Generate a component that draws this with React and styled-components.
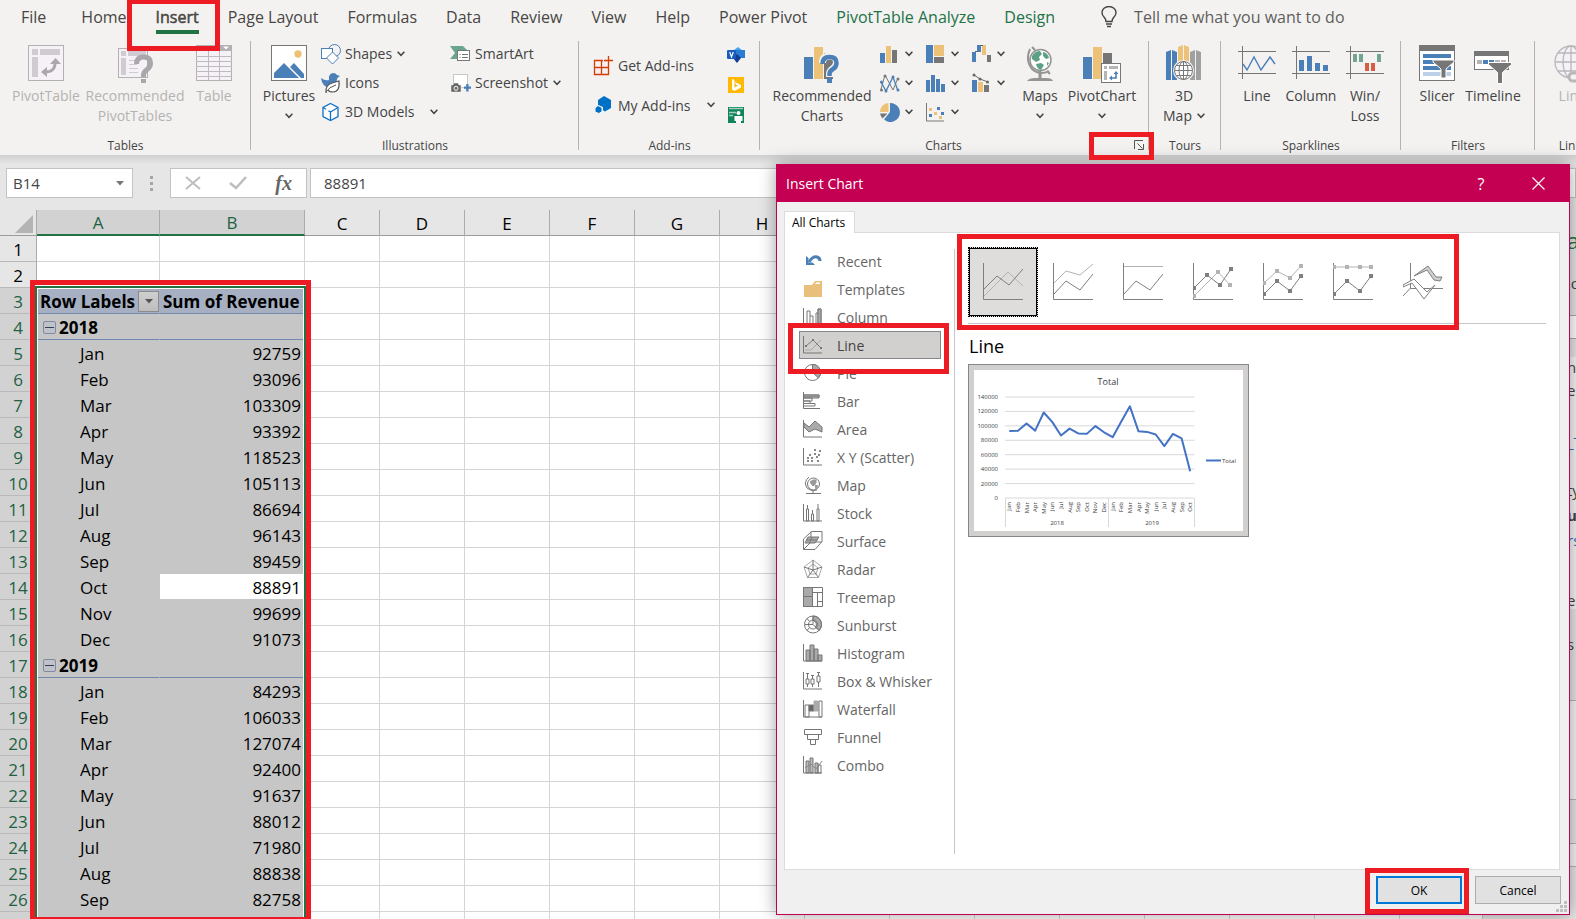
import React from "react";
import styled, { createGlobalStyle, css } from "styled-components";

const ui = `"Open Sans", "Noto Sans", sans-serif`;
const RED = "#ed1c24";
const GREEN = "#217346";
const BLUE = "#4a7fb8";
const GOLD = "#ecc279";
const GRAY = "#767676";

const Global = createGlobalStyle`
  *, *::before, *::after { box-sizing: border-box; }
  html, body, #root { height: 100%; }
  body { margin: 0; overflow: hidden; font-family: ${ui}; color: #444; }
  button, input { font: inherit; color: inherit; }
  button { margin: 0; padding: 0; border: 0; background: none; }
  svg { display: block; flex: none; }
`;

const Window = styled.div`
  position: relative;
  height: 100%;
  display: flex;
  flex-direction: column;
  overflow: hidden;
  background: #e6e6e6;
`;

const Marker = styled.span`
  position: absolute;
  border: 5px solid ${RED};
  pointer-events: none;
  z-index: 3;
`;
const TabMarker = styled(Marker)`inset: -1px -7px -12px -15px;`;
const LauncherMarker = styled(Marker)`inset: -8px -10px -10px -45px;`;
const NavMarker = styled(Marker)`inset: -8px -8px -15px -11px;`;
const GalleryMarker = styled(Marker)`inset: -13px 87px -7px -11px;`;
const OkMarker = styled(Marker)`inset: -8px -7px -10px -11px;`;
const RangeMarker = styled(Marker)`
  top: 70px;
  left: 30px;
  width: 281px;
  bottom: -3px;
`;

/* ---------- Ribbon ---------- */
const Ribbon = styled.header`
  flex: none;
  background: #f3f2f1;
  position: relative;
`;
const TabRow = styled.nav`
  display: flex;
  gap: 1px;
  height: 39px;
  padding-left: 7px;
`;
const Tab = styled.button`
  position: relative;
  flex: none;
  height: 39px;
  padding: 0 14px 5px;
  font-size: 16px;
  line-height: 34px;
  white-space: nowrap;
  color: ${(p) => (p.$contextual ? GREEN : "#484644")};
  &:first-child { margin-right: 6px; }
  ${(p) => p.$active && css`
    -webkit-text-stroke: 0.5px #484644;
    &::after {
      content: "";
      position: absolute;
      left: 14px;
      right: 14px;
      bottom: 5px;
      height: 4px;
      background: ${GREEN};
    }
  `}
`;
const TellMe = styled.label`
  display: flex;
  align-items: center;
  gap: 17px;
  height: 34px;
  padding-left: 31px;
  font-size: 16px;
`;
const TellInput = styled.input`
  width: 240px;
  padding: 0;
  border: 0;
  background: none;
  &::placeholder { color: #605e5c; opacity: 1; }
`;
const Groups = styled.div`
  display: flex;
  height: 116px;
`;
const Group = styled.section`
  position: relative;
  flex: none;
  width: ${(p) => p.$width}px;
  display: flex;
  flex-direction: column;
  justify-content: space-between;
  padding-bottom: 1px;
  &::after {
    content: "";
    position: absolute;
    top: 2px;
    right: 0;
    bottom: 5px;
    width: 1px;
    background: #b5b2b0;
  }
`;
const GroupBody = styled.div`
  display: flex;
  padding-left: ${(p) => p.$inset || 10}px;
`;
const GroupFoot = styled.div`
  display: flex;
  align-items: center;
  height: 18px;
  font-size: 12px;
`;
const GroupName = styled.span`
  flex: 1;
  text-align: center;
`;
const Launcher = styled.button`
  position: relative;
  width: 10px;
  height: 10px;
  margin: 0 5px 0 7px;
`;
const BigButton = styled.button`
  flex: none;
  display: flex;
  flex-direction: column;
  align-items: center;
  width: ${(p) => p.$width}px;
  padding-top: 4px;
  font-size: 14px;
  line-height: 20px;
  white-space: nowrap;
  color: ${(p) => (p.disabled ? "#b5b3b1" : "#444")};
`;
const BigIcon = styled.span`
  height: 43px;
`;
const BigLabel = styled.span`
  display: flex;
  align-items: center;
  gap: 5px;
`;
const ChevronLine = styled.span`
  height: 18px;
  padding-top: 7px;
`;
const Stack = styled.div`
  display: flex;
  flex-direction: column;
  width: ${(p) => p.$width}px;
  padding-top: ${(p) => p.$top || 0}px;
  padding-left: ${(p) => p.$left || 0}px;
`;
const SmallButton = styled.button`
  display: flex;
  align-items: center;
  gap: 3px;
  height: ${(p) => p.$height || 29}px;
  font-size: 14px;
  white-space: nowrap;
`;
const SmallText = styled.span`
  margin-right: ${(p) => (p.$split ? 13 : 2)}px;
`;
const ChartGrid = styled.div`
  display: grid;
  grid-template-columns: 46px 46px 44px;
  grid-auto-rows: 29px;
  padding-left: 6px;
`;
const ChartButton = styled.button`
  display: flex;
  align-items: center;
  gap: 5px;
`;

/* ---------- Formula bar ---------- */
const FormulaBar = styled.div`
  flex: none;
  display: flex;
  align-items: flex-start;
  height: 55px;
  padding: 13px 0 0 6px;
  background: linear-gradient(#cfcfcf, #e6e6e6 9px);
`;
const Field = styled.div`
  display: flex;
  align-items: center;
  height: 30px;
  background: #fff;
  border: 1px solid #c3c3c3;
`;
const NameBox = styled(Field)`
  width: 127px;
  padding-right: 8px;
`;
const NameInput = styled.input`
  flex: 1;
  min-width: 0;
  padding: 0 0 0 6px;
  border: 0;
  outline: 0;
  background: none;
  font-size: 15px;
`;
const Dots = styled.span`
  display: grid;
  gap: 3px;
  width: 37px;
  padding: 8px 0 0 17px;
  i { width: 3px; height: 3px; background: #a6a6a6; }
`;
const Actions = styled(Field)`
  width: 137px;
  justify-content: space-around;
  margin-right: 3px;
`;
const FxButton = styled.button`
  font: italic 700 20px "Liberation Serif", serif;
  color: #666;
`;
const FormulaField = styled(Field)`flex: 1;`;
const FormulaInput = styled(NameInput)`
  padding-left: 13px;
`;

/* ---------- Worksheet ---------- */
const Body = styled.div`
  flex: 1;
  min-height: 0;
  display: flex;
`;
const Sheet = styled.main`
  position: relative;
  flex: 1;
  min-width: 0;
  overflow: hidden;
  background: #fff;
`;
const Grid = styled.table`
  width: 1450px;
  table-layout: fixed;
  border-collapse: separate;
  border-spacing: 0;
  font-size: 17px;
  line-height: 23px;
  color: #000;
`;
const Col = styled.col`width: ${(p) => p.$width}px;`;
const ColHead = styled.th`
  height: 26px;
  padding: 1px 0 0;
  font-weight: 400;
  border-right: 1px solid #ababab;
  border-bottom: ${(p) => (p.$on ? `2px solid ${GREEN}` : "1px solid #9c9c9c")};
  background: ${(p) => (p.$on ? "#d2d2d2" : "#e6e6e6")};
  color: ${(p) => (p.$on ? "#1e6242" : "#000")};
`;
const Corner = styled(ColHead)`
  padding: 3px 3px 0 15px;
`;
const RowHead = styled.th`
  height: 26px;
  padding: 2px 0 0;
  font-weight: 400;
  border-right: 1px solid #ababab;
  border-bottom: 1px solid #b9b9b9;
  background: ${(p) => (p.$on ? "#d2d2d2" : "#e6e6e6")};
  color: ${(p) => (p.$on ? "#1e6242" : "#000")};
`;
const Cell = styled.td`
  height: 26px;
  padding: 0;
  border-right: 1px solid #d4d4d4;
  border-bottom: 1px solid #d4d4d4;
`;
const PivotCell = styled.td`
  height: 26px;
  padding: 2px 3px 0;
  border-right: 1px solid ${(p) => (p.$head ? "#a6b0c2" : "#c6c6c6")};
  border-bottom: 1px solid ${(p) => (p.$rule ? "#7288ad" : "#c6c6c6")};
  background: ${(p) => (p.$active ? "#fff" : p.$head ? "#a6b0c2" : "#c6c6c6")};
  font-weight: ${(p) => (p.$bold ? 700 : 400)};
  text-align: ${(p) => (p.$num ? "right" : "left")};
  padding-left: ${(p) => (p.$indent ? 43 : 3)}px;
  white-space: nowrap;
`;
const HeadLine = styled.span`
  display: flex;
  align-items: center;
  justify-content: space-between;
`;
const FilterButton = styled.button`
  display: grid;
  place-items: center;
  width: 21px;
  height: 21px;
  margin-right: -3px;
  border: 1px solid #8b8b8b;
  background: linear-gradient(#cfcfcf, #bdbdbd);
`;
const YearLine = styled.span`
  display: flex;
  align-items: center;
  gap: 3px;
  padding-left: 3px;
`;
const Collapse = styled.button`
  display: grid;
  place-items: center;
  width: 13px;
  height: 13px;
  border: 1px solid #7e8ba3;
  border-radius: 2px;
  background: #bfc3c9;
  &::after { content: ""; width: 9px; height: 1px; background: #333f55; }
`;
const Selection = styled.div`
  position: absolute;
  top: 76px;
  left: 35px;
  width: 271px;
  bottom: -4px;
  border: 2px solid ${GREEN};
  box-shadow: inset 0 0 0 1px #fff, 0 -1px 0 #fff;
  pointer-events: none;
`;

/* ---------- Field pane at the right edge ---------- */
const Pane = styled.aside`
  flex: none;
  width: 94px;
  background: #e6e6e6;
  border-left: 1px solid #c6c6c6;
  overflow: hidden;
`;
const PaneText = styled.div`
  height: 20px;
  margin-top: ${(p) => p.$gap}px;
  padding-left: 84px;
  font-size: 15px;
  line-height: 20px;
  white-space: nowrap;
  font-weight: ${(p) => (p.$bold ? 700 : 400)};
  color: ${(p) => p.$color || "#444"};
`;
const PaneTitle = styled(PaneText)`
  font-size: 22px;
  color: ${GREEN};
`;
const PaneSearch = styled.div`
  height: 24px;
  margin: 22px 0 18px;
  border: 1px solid #ababab;
  border-right: 0;
  background: #fff;
`;
const PaneList = styled.div`
  height: 252px;
  background: #f6f6f6;
  overflow: hidden;
`;
const PaneArea = styled.div`
  height: ${(p) => p.$height}px;
  margin-top: ${(p) => p.$gap}px;
  border: 1px solid #b6b6b6;
  border-right: 0;
  background: #f6f6f6;
`;

/* ---------- Dialog ---------- */
const Dialog = styled.section`
  position: absolute;
  z-index: 2;
  top: 164px;
  right: 6px;
  bottom: 4px;
  width: 794px;
  display: flex;
  flex-direction: column;
  border: 1px solid #c30052;
  background: #f0f0f0;
  box-shadow: 0 0 16px rgba(0, 0, 0, 0.38);
  color: #000;
`;
const TitleBar = styled.div`
  flex: none;
  display: flex;
  align-items: center;
  height: 37px;
  padding: 0 22px 0 9px;
  background: #c30052;
  color: #fff;
`;
const Title = styled.h1`
  flex: 1;
  margin: 0;
  font-size: 14px;
  font-weight: 400;
`;
const TitleButton = styled.button`
  display: grid;
  place-items: center;
  width: 18px;
  margin-left: 39px;
  font-size: 16px;
`;
const DialogTabs = styled.div`
  display: flex;
  padding: 9px 0 0 7px;
`;
const DialogTab = styled.button`
  position: relative;
  z-index: 1;
  width: 71px;
  height: 22px;
  margin-bottom: -1px;
  padding-right: 2px;
  border: 1px solid #dcdcdc;
  border-bottom: 0;
  background: #fff;
  font-size: 12px;
`;
const Panel = styled.div`
  flex: 1;
  min-height: 0;
  display: flex;
  margin: 0 9px 0 7px;
  border: 1px solid #dcdcdc;
  background: #fff;
`;
const TypeList = styled.ul`
  flex: none;
  width: 156px;
  margin: 0;
  padding: 14px 0 0;
  list-style: none;
`;
const TypeItem = styled.li`
  position: relative;
  width: 142px;
  margin-left: 14px;
`;
const TypeButton = styled.button`
  display: flex;
  align-items: center;
  gap: 14px;
  width: 142px;
  height: 28px;
  padding-left: 3px;
  border: 1px solid ${(p) => (p.$on ? "#85878a" : "transparent")};
  background: ${(p) => (p.$on ? "#d1d0ce" : "none")};
  font-size: 14px;
  white-space: nowrap;
  color: ${(p) => (p.$on ? "#444" : "#666")};
`;
const Divider = styled.div`
  width: 14px;
  margin: 16px 0 15px 13px;
  border-left: 1px solid #c6c6c6;
`;
const Detail = styled.div`
  flex: 1;
  min-width: 0;
  padding: 14px 13px 0 0;
`;
const Gallery = styled.div`
  position: relative;
  display: flex;
  padding-bottom: 6px;
  border-bottom: 1px solid #c6c6c6;
`;
const Thumb = styled.button`
  display: grid;
  place-items: center;
  width: 70px;
  height: 70px;
  ${(p) => p.$on && css`
    border: 1px dotted #000;
    outline: 1px solid #000;
    outline-offset: -2px;
    background: #dedddc;
  `}
`;
const Heading = styled.h2`
  margin: 0;
  padding: 9px 0 5px 1px;
  font-size: 18px;
  line-height: 26px;
  font-weight: 400;
`;
const Preview = styled.button`
  display: block;
  padding: 5px;
  border: 1px solid #85878a;
  background: #d1d0ce;
  svg { background: #fff; }
`;
const Footer = styled.div`
  flex: none;
  display: flex;
  justify-content: flex-end;
  gap: 13px;
  padding: 6px 8px 10px;
`;
const OkWrap = styled.span`position: relative;`;
const DialogButton = styled.button`
  display: block;
  width: 86px;
  height: 28px;
  border: ${(p) => (p.$primary ? "2px solid #0078d7" : "1px solid #adadad")};
  background: #e1e1e1;
  font-size: 12px;
`;
const Grip = styled.svg`
  position: absolute;
  right: 2px;
  bottom: 2px;
`;

/* ---------- Drawings ---------- */
const Chevron = () => (
  <svg width="8" height="6" viewBox="0 0 8 6" fill="none" stroke="#444" strokeWidth="1.5"><path d="M.6.8 4 4.3 7.4.8" /></svg>
);

const PivotIcon = () => (
  <svg width="36" height="40" viewBox="0 0 36 40">
    <rect x=".5" y="2.5" width="35" height="35" fill="#f5f1f6" stroke="#b3b1b3" />
    <path d="M4 6h6v6H4zM12 6h20v6H12zM4 14h6v20H4z" fill="#cfcbd0" />
    <path d="M15 29q13 1 12-11" fill="none" stroke="#aaa8aa" strokeWidth="3" />
    <path d="m22 21 5.500-6 5.500 6zM19 24l-6 5 6 5z" fill="#aaa8aa" />
  </svg>
);
const RecPivotIcon = () => (
  <svg width="36" height="42" viewBox="0 0 36 42">
    <rect x="1.500" y="5.500" width="29" height="29" fill="#f5f1f6" stroke="#b3b1b3" />
    <path d="M4 8h5v5H4zM11 8h18v5H11zM4 15h5v17H4z" fill="#cfcbd0" />
    <path d="M12 17.500h8M12 21.500h8M12 25.500h9M12 29.500h9" stroke="#cfcbd0" />
    <path d="M19.500 21q0-7 7-7t7 6q0 4-3.500 6.500T26.500 32v2" fill="none" stroke="#a9a7a9" strokeWidth="5" />
    <path d="M24 36h5v4h-5z" fill="#a9a7a9" />
  </svg>
);
const TableIcon = () => (
  <svg width="36" height="40" viewBox="0 0 36 40">
    <rect x=".5" y="2.500" width="35" height="35" fill="#f5f1f6" stroke="#b3b1b3" />
    <path d="M0 2h36v6H0z" fill="#b3b1b3" />
    <path d="M27 3.500h6l-3 3z" fill="#fff" />
    <path d="M0 13.500h36M0 18.500h36M0 23.500h36M0 28.500h36M0 33.500h36M12.500 8v30M23.500 8v30" stroke="#bdbbbd" />
  </svg>
);
const PicturesIcon = () => (
  <svg width="36" height="40" viewBox="0 0 36 40">
    <rect x=".5" y="2.500" width="35" height="35" fill="#fff" stroke="#767676" />
    <circle cx="27" cy="11" r="3.700" fill={GOLD} />
    <path d="M3 35V30L13 20l15 15zM19 24l4-4 10 11v4h-3z" fill={BLUE} />
  </svg>
);
const ShapesIcon = () => (
  <svg width="22" height="22" viewBox="0 0 22 22" fill="#fff" stroke={BLUE}>
    <circle cx="14.500" cy="7.500" r="6" fill="#f3f2f1" /><rect x="1.500" y="5.500" width="11" height="10" /><path d="m12.500 9 6 6-6 6-6-6z" />
  </svg>
);
const IconsIcon = () => (
  <svg width="22" height="22" viewBox="0 0 22 22">
    <path d="M1 6q4 3 8 2Q8 2 13 1q3 0 4 2l3 1q-2 1-3 3 0 4-4 6l-4 3Q2 14 1 6z" fill={BLUE} />
    <path d="M6 21q-1-8 6-10l7-2q1 11-6 11-4 0-5-2" fill="#fff" stroke="#555" strokeWidth="1.200" />
    <path d="M6 20q3-5 10-7" fill="none" stroke="#555" />
  </svg>
);
const CubeIcon = () => (
  <svg width="22" height="22" viewBox="0 0 22 22" fill="#fff" stroke="#1170c0" strokeWidth="1.300">
    <path d="m10.500 2.500 7.500 4v9l-7.500 4-7.500-4v-9z" /><path d="m3 6.500 3 1.700M18 6.500l-7.500 4.500v8.500M10.500 11 8.500 9.900" />
  </svg>
);
const SmartArtIcon = () => (
  <svg width="22" height="22" viewBox="0 0 22 22">
    <path d="M0 3h13l4 4H8v9H0l5-6z" fill="#6aa58f" /><rect x="7.500" y="7.500" width="12" height="10" fill="#fff" stroke="#767676" />
    <path d="M9.500 11.500h1M12 11.500h6M9.500 14.500h1M12 14.500h6" stroke="#767676" />
  </svg>
);
const ScreenshotIcon = () => (
  <svg width="22" height="22" viewBox="0 0 22 22">
    <rect x="3.500" y="2.500" width="14" height="13" fill="#fff" stroke="#999" strokeDasharray="1 1" />
    <path d="M1 13h2l1-2h4l1 2h2v7H1z" fill="#666" stroke="#f3f2f1" strokeWidth=".5" /><circle cx="6" cy="16.300" r="2" fill="#666" stroke="#fff" />
    <path d="M14 14.500h2.200v-2.500h2.300v2.500H21v2.200h-2.500v2.800h-2.300v-2.800H14z" fill={BLUE} />
  </svg>
);
const GetIcon = () => (
  <svg width="22" height="22" viewBox="0 0 22 22" fill="none" stroke="#d83b01" strokeWidth="1.300">
    <path d="M1.500 6.500h14v14h-14zM1.500 13.500h14M8.500 6.500v14" /><path d="M15.500 1v10M10 5.500h10" stroke="#f3f2f1" strokeWidth="4" /><path d="M15.500 2v9M11 6.500h9" />
  </svg>
);
const MyIcon = () => (
  <svg width="22" height="20" viewBox="0 0 22 20" fill="#0072c6"><path d="m11 1 7 4v8l-6 3.500-2-1.200V12l-5-2V5z" /><path d="m5 10.500 4 2v4l-3 2-4-1.500v-4z" stroke="#f3f2f1" /></svg>
);
const VisioIcon = () => (
  <svg width="18" height="16" viewBox="0 0 18 16">
    <path d="M7 3 11 0l5 4-4 4z" fill="#41a5ee" /><path d="M9 3h9v8H9z" fill="#2b7cd3" /><path d="m6 11 4-4 4 4-4 5z" fill="#103f91" />
    <rect y="3" width="9" height="9" rx="1" fill="#185abd" /><path d="m2.700 5 1.800 5 1.800-5" fill="none" stroke="#fff" strokeWidth="1.200" />
  </svg>
);
const BingIcon = () => (
  <svg width="18" height="16" viewBox="0 0 18 16"><path d="M1 0h16v16H1z" fill="#ffb900" /><path d="m5 2 2.500 1v7.500L5 13zM7.500 10.500 11 8.700 8.800 7.500 8 5l6 3v2.500L7.500 14 5 12.500z" fill="#fff" /></svg>
);
const PeopleIcon = () => (
  <svg width="18" height="16" viewBox="0 0 18 16"><path d="M1 0h16v16H1z" fill="#12845a" /><path d="M2 1.500h14M2 5.500h7M2 8.500h4" stroke="#9fd2be" strokeWidth="1.500" /><circle cx="11.500" cy="6" r="2" fill="#fff" /><path d="M7.500 9h8v5h-1.500v2h-5v-2H7.500z" fill="#fff" /></svg>
);
const RecChartIcon = () => (
  <svg width="36" height="42" viewBox="0 0 36 42">
    <path d="M0 14h9v22H0z" fill={BLUE} /><path d="M10 4h9v32h-9z" fill={GOLD} /><path d="M20 10h9v26h-9z" fill="#767676" />
    <path d="M18.500 20q0-7 7-7t7 6q0 4-3.500 6.500T25.500 31v3" fill="none" stroke="#f3f2f1" strokeWidth="7" />
    <path d="M18.500 21q0-7 7-7t7 6q0 4-3.500 6T25.500 31v2" fill="none" stroke={BLUE} strokeWidth="4.500" /><path d="M23 35h5v5h-5z" fill={BLUE} />
  </svg>
);
const PivotChartIcon = () => (
  <svg width="38" height="42" viewBox="0 0 38 42">
    <path d="M0 14h9v22H0z" fill={BLUE} /><path d="M10 4h9v32h-9z" fill={GOLD} /><path d="M20 10h9v16h-9z" fill="#767676" />
    <rect x="18.500" y="20.500" width="19" height="19" fill="#fff" stroke="#767676" />
    <path d="M21 23h3v3h-3zM26 23h9v3h-9zM21 28h3v9h-3z" fill="#b5b5b5" /><path d="M28 35h5v-5" fill="none" stroke={BLUE} strokeWidth="1.600" /><path d="m30.500 31 2.500-3 2.500 3zM29 32.500 26 35l3 2.500z" fill={BLUE} />
  </svg>
);
const GlobeIcon = () => (
  <svg width="28" height="40" viewBox="0 0 28 40">
    <path d="M4 6Q-1 17 6 26q8 7 17 2" fill="none" stroke="#949494" strokeWidth="2" /><path d="m6 4 3 3M21 28l3 3" stroke="#949494" strokeWidth="2" />
    <circle cx="14.500" cy="17" r="10.500" fill="#fff" stroke="#949494" strokeWidth="1.500" />
    <path d="M6 13q3-5 8-5l2 3-3 3 1 3-4 2-4-3zM17 9q5 1 6 6l-3 1-3-3zM10 21l5-1 3 2-3 5q-4-1-5-6zM21 19l2 1-2 3z" fill="#5aa283" />
    <path d="M14 28v7" stroke="#949494" strokeWidth="3" /><path d="M1 38q2-3 8-3h11q6 0 7 3z" fill="#949494" />
  </svg>
);
const MapIcon = () => (
  <svg width="36" height="40" viewBox="0 0 36 40">
    <path d="M0 9l5-2v30l-5 0zM6 7l5 2v28l-5 0z" fill={BLUE} /><path d="m12 4 5-2v28h-5zM18 2l5 2v26h-5z" fill={GOLD} /><path d="m24 9 5-2v30h-5zM30 7l5 2v28h-5z" fill="#a0a0a0" />
    <circle cx="17.500" cy="27.500" r="10.500" fill="#f3f2f1" /><circle cx="17.500" cy="27.500" r="9" fill="#fff" stroke="#777" />
    <g fill="none" stroke="#777"><ellipse cx="17.500" cy="27.500" rx="4.500" ry="9" /><path d="M8.500 27.500h18M10 22.500h15M10 32.500h15M17.500 18.500v18" /></g>
  </svg>
);
const SparkFrame = ({ children }) => (
  <svg width="38" height="40" viewBox="0 0 38 40"><path d="M0 8.500h38M0 30.500h38M4.500 3v33" stroke="#767676" />{children}</svg>
);
const SlicerIcon = () => (
  <svg width="36" height="40" viewBox="0 0 36 40">
    <rect x=".5" y="2.500" width="35" height="35" fill="#fff" stroke="#767676" /><path d="M0 2h36v6H0z" fill="#767676" />
    <path d="M4 11h28v4H4zM4 17h28v4H4zM4 23h28v4H4z" fill={BLUE} /><path d="M4 29h28v4H4z" fill="#bcd0e8" />
    <path d="M14 17h21v2l-8 7v9h-5v-9l-8-7z" fill="#767676" stroke="#fff" />
  </svg>
);
const TimelineIcon = () => (
  <svg width="38" height="42" viewBox="0 0 38 42">
    <rect x=".5" y="8.500" width="34" height="18" fill="#fff" stroke="#767676" /><path d="M0 8h35v5H0z" fill="#767676" />
    <path d="M3 17h5v4H3zM21 17h5v4h-5zM27 17h5v4h-5z" fill="#b5b5b5" /><path d="M9 17h5v4H9zM15 17h5v4h-5z" fill={BLUE} />
    <path d="M14.500 19.500h23v2l-9 8v11h-5v-11l-9-8z" fill="#767676" stroke="#fff" />
  </svg>
);
const LinkIcon = () => (
  <svg width="36" height="42" viewBox="0 0 36 42" fill="none" stroke="#b9b7ba" strokeWidth="1.300">
    <circle cx="17" cy="19" r="16" fill="#f5f1f6" /><ellipse cx="17" cy="19" rx="8" ry="16" /><path d="M1 19h32M4 10h26M4 28h26M17 3v32" />
    <rect x="15" y="30" width="14" height="8" rx="4" fill="#f3f2f1" strokeWidth="3" />
  </svg>
);

const mini = {
  column: <><path d="M0 9h5v10H0z" fill={BLUE} /><path d="M6 2h5v17H6z" fill={GOLD} /><path d="M12 6h5v13h-5z" fill={GRAY} /></>,
  tree: <><path d="M0 1h7v18H0z" fill={BLUE} /><path d="M8 1h10v11H8z" fill={GOLD} /><path d="M8 13h10v6H8z" fill={GRAY} /></>,
  waterfall: <><path d="M0 8h4v10H0zM5 1h4v7H5z" fill={BLUE} /><path d="M10 1h4v10h-4z" fill={GOLD} /><path d="M15 11h4v7h-4z" fill={GRAY} /><path d="M3 7.500h3M8 1.500h3" stroke="#666" /></>,
  line: <><path d="m1 16 4-14 8 15 5-12" fill="none" stroke="#777" /><path d="m1 9 5 9 7-14 5 14" fill="none" stroke={BLUE} strokeWidth="1.300" /><g fill="#777"><circle cx="5" cy="3" r="1.500" /><circle cx="1.500" cy="17" r="1.500" /><circle cx="18" cy="6" r="1.500" /></g><g fill={BLUE}><circle cx="1.500" cy="9" r="1.500" /><circle cx="6" cy="18" r="1.500" /><circle cx="13" cy="4" r="1.500" /><circle cx="18" cy="17" r="1.500" /></g></>,
  histogram: <path d="M0 7h4v12H0zM5 2h4v17H5zM10 6h4v13h-4zM15 11h4v8h-4z" fill={BLUE} />,
  combo: <><path d="M0 7h5v12H0z" fill={BLUE} /><path d="M6 9h5v10H6z" fill={GOLD} /><path d="M12 12h5v7h-5z" fill={GRAY} /><path d="m2 2 6 4 8 3" fill="none" stroke="#666" /><g fill="#666"><circle cx="2" cy="2" r="1.500" /><circle cx="8" cy="6" r="1.500" /><circle cx="15.500" cy="9" r="1.500" /></g></>,
  pie: <><path d="M10 1a9.500 9.500 0 1 1-6 16.500L10 10z" fill={BLUE} /><path d="M8.500 1v9H0a9 9 0 0 1 8.500-9z" fill={GOLD} /><path d="M0 11.500h7.500l-5 5Q.5 14 0 11.500z" fill={GRAY} /></>,
  scatter: <><path d="M.5 1v18H18" fill="none" stroke="#767676" /><path d="M3 6h3v3H3zM8 10h3v3H8zM13 14h3v3h-3z" fill={GOLD} /><path d="M11 5h3v3h-3zM3 12h3v3H3zM15 10h3v3h-3z" fill={BLUE} /></>,
};
const miniCharts = [
  ["Column charts", "column"], ["Hierarchy charts", "tree"], ["Waterfall charts", "waterfall"],
  ["Line charts", "line"], ["Statistic charts", "histogram"], ["Combo charts", "combo"],
  ["Pie charts", "pie"], ["Scatter charts", "scatter"],
];

const axes = <path d="M.5 1v17H19" />;
const typeIcons = {
  Recent: <><path d="M6 11Q10 5 14 6q3 1 3 4" stroke={BLUE} strokeWidth="3" /><path d="M3 5v9h9l-2.500-2.500H5.500V7z" fill={BLUE} stroke="none" /></>,
  Templates: <><path d="M1 6h8l3-4h7v16H1z" fill="#e9bf7c" stroke="none" /><path d="M12 5h5V3.500h-4z" fill="#fff" stroke="none" /></>,
  Column: <>{axes}<path d="M4 18V4h3v14M7 9h3v9M13 18V6h2M15 18V2h3v16" /><path d="M15 2h3v16h-3z" fill="#aaa" /></>,
  Line: <>{axes}<path d="m2 15 6 0L18 5" stroke="#aaa" /><path d="m3 11 7-6 8 8" /><path d="M2 10h2v2H2zM9 4h2v2H9zM17 12h2v2h-2z" fill={GRAY} stroke="none" /></>,
  Pie: <><circle cx="9.500" cy="9.500" r="8" /><path d="M9.500 9.500v-8a8 8 0 0 1 6 13.500z" fill="#aaa" /><path d="M1.500 9.500h8" /></>,
  Bar: <><path d="M.5 1v16.500H17" /><path d="M1 4h15v3H1M1 7h8v3H1M1 10h6v2.500H1M1 12.500h11V15H1" /><path d="M1 4h15v2H1z" fill="#aaa" /></>,
  Area: <><path d="m1 4 5 4 6-6 7 6v5l-7-3-6 3-5-5z" fill="#aaa" />{axes}</>,
  "X Y (Scatter)": <>{axes}<path d="M11 3h2M16 4h2M6 8h2M11 7h2M15 8h2M4 11h2M8 11h2M13 10h2M4 14h2M8 14h2M14 14h2" strokeWidth="2" stroke="#888" /></>,
  Map: <><circle cx="10.500" cy="9" r="6" /><path d="M7 7q3-3 6-2v3l-3 3zM12 10l3 1-2 3z" fill="#999" stroke="#999" /><path d="M6 2Q0 7 4 13q4 4 10 2M10 16v3M3 18.500h15" /></>,
  Stock: <>{axes}<path d="M3.500 6h2v12h-2zM8.500 11h2v7h-2zM14 6h2v12h-2zM4.500 2v4M9.500 7v4M15 1v5" /></>,
  Surface: <><path d="m.5 8 8-7.500h10.500v10l-7 8H.5zM.5 18.500 8 11h11M8 .5V11" /><path d="m5 6-3 6h10l4-6z" fill="#aaa" /><path d="m3.500 9h11M9 6l-2.500 6" /></>,
  Radar: <><path d="m10 1 9 7-3.500 10.500h-11L1 8z" stroke="#aaa" /><path d="m10 5 5 4-2 6H7L5 9z" stroke="#aaa" /><path d="M10 1v10M1 8l9 3 9-3M4.500 18.500 10 11l5.500 7.500" /></>,
  Treemap: <><path d="M.5.5h9v19h-9z" fill="#aaa" /><path d="M.5.500h19v19H.5zM.5 9.500h9M9.500.5v19M9.500 5.500h10M14.500 5.500v14M14.500 14.500h5" /></>,
  Sunburst: <><path d="M10 1a8.500 8.500 0 0 1 6 14.500L12.500 12a4 4 0 0 0-2.500-6.500z" fill="#aaa" /><circle cx="10" cy="9.500" r="8.500" /><circle cx="10" cy="9.500" r="4.500" /><path d="M10 1v8.500h-8M6.500 12.500 4 15.500M10 9.500l6 6M6.500 6.500 4 3.500" /></>,
  Histogram: <><path d="M3 7h4v11H3zM7 2h4v16H7zM11 6h4v12h-4zM15 12h4v6h-4z" fill="#aaa" />{axes}</>,
  "Box & Whisker": <>{axes}<path d="M3 8h3v5H3zM8 8h3v5H8zM14 5h3v6h-3zM4.500 2v6M4.500 13v3M9.500 4v4M9.500 13v3M15.500 1v4M15.500 11v5M3 2.500h3M8 4.500h3M14 1.500h3" /></>,
  Waterfall: <>{axes}<path d="M2 6h4v12H2z" /><path d="M6 6h5v6H6z" fill="#666" /><path d="M11 2h4v10h-4z" fill="#aaa" stroke="#aaa" /><path d="M16 2h3v16h-3z" /></>,
  Funnel: <path d="M1.500 2.500h17v5h-17zM4.500 7.500h11v5h-11zM7.500 12.500h5v5h-5z" />,
  Combo: <><path d="M3 6h3v12H3zM7 3h3v15H7zM12 8h3v10h-3z" fill="#bbb" /><path d="M15 10h3v8h-3z" />{axes}<path d="m2 13 6-4 5 5 6-8" stroke="#888" /></>,
};
const TypeIcon = ({ name }) => (
  <svg width="20" height="20" viewBox="0 0 20 20" fill="none" stroke={GRAY}>{typeIcons[name]}</svg>
);

const DK = "#7f7f7f";
const LT = "#b3b3b3";
const thumbs = [
  { name: "Line", light: [[1, 33], [25, 9], [40, 23]], dark: [[1, 26], [14, 13], [26, 22], [40, 6]] },
  { name: "Stacked Line", light: [[1, 20], [13, 8], [27, 12], [40, 1]], dark: [[1, 31], [13, 18], [27, 27], [40, 11]] },
  { name: "100% Stacked Line", light: [[1, 3.5], [40, 3.5]], dark: [[1, 31], [13, 18], [27, 27], [40, 11]] },
  { name: "Line with Markers", dots: true, light: [[1, 33], [25, 9], [37, 22]], dark: [[1, 25], [14, 12], [27, 22], [38, 6]] },
  { name: "Stacked Line with Markers", dots: true, light: [[1, 20], [14, 8], [27, 15], [38, 3]], dark: [[1, 31], [14, 18], [27, 28], [38, 13]] },
  { name: "100% Stacked Line with Markers", dots: true, light: [[1, 4], [14, 4], [27, 4], [38, 4]], dark: [[1, 31], [14, 18], [27, 28], [38, 13]] },
];
const Series = ({ points, color, dots }) => (
  <>
    <polyline points={points.join(" ")} stroke={color} fill="none" />
    {dots && points.map(([x, y]) => <rect key={x} x={x - 2} y={y - 2} width="4" height="4" fill={color} />)}
  </>
);

const sales2018 = [92759, 93096, 103309, 93392, 118523, 105113, 86694, 96143, 89459, 88891, 99699, 91073];
const sales2019 = [84293, 106033, 127074, 92400, 91637, 88012, 71980, 88838, 82758, 37000];
const months = ["Jan", "Feb", "Mar", "Apr", "May", "Jun", "Jul", "Aug", "Sep", "Oct", "Nov", "Dec"];

function PreviewChart() {
  const all = [...sales2018, ...sales2019];
  const step = 189.5 / all.length;
  const x = (i) => 32 + step * (i + 0.5);
  const y = (v) => 129 - (v / 140000) * 101;
  return (
    <svg width="269" height="161" viewBox="1 1 269 161" fontFamily={ui} fontSize="6" fill="#3c3c3c">
      <text x="135" y="16" fontSize="9" textAnchor="middle">Total</text>
      {[0, 2, 4, 6, 8, 10, 12, 14].map((n) => (
        <g key={n}>
          <path d={`M32 ${y(n * 10000)}H221.500`} stroke="#d9d9d9" />
          <text x="25" y={y(n * 10000) + 2} textAnchor="end">{n * 10000}</text>
        </g>
      ))}
      <path d="M32.500 129v29M135.500 129v29M221.500 129v29" stroke="#d9d9d9" />
      {all.map((v, i) => (
        <text key={i} textAnchor="end" transform={`translate(${x(i) + 2} 133) rotate(-90)`}>{months[i % 12]}</text>
      ))}
      <text x="84" y="156" textAnchor="middle">2018</text>
      <text x="179" y="156" textAnchor="middle">2019</text>
      <polyline points={all.map((v, i) => `${x(i)},${y(v)}`).join(" ")} fill="none" stroke="#4472c4" strokeWidth="2" strokeLinejoin="round" />
      <path d="M233 91.500h15" stroke="#4472c4" strokeWidth="2" />
      <text x="249" y="94">Total</text>
    </svg>
  );
}

/* ---------- Data ---------- */
const tabs = ["File", "Home", "Insert", "Page Layout", "Formulas", "Data", "Review", "View", "Help", "Power Pivot", "PivotTable Analyze", "Design"];
const rows = [
  { kind: "blank" }, { kind: "blank" }, { kind: "head" },
  { kind: "year", label: "2018" },
  ...sales2018.map((v, i) => ({ kind: "month", label: months[i], value: v })),
  { kind: "year", label: "2019" },
  ...sales2019.slice(0, 9).map((v, i) => ({ kind: "month", label: months[i], value: v })),
  { kind: "rest" },
];
const columns = "ABCDEFGHIJKLMNOP".split("");
const widths = { A: 123, B: 145, C: 75 };

const Big = ({ icon, lines, width, disabled, chevron, inline }) => (
  <BigButton $width={width} disabled={disabled}>
    <BigIcon>{icon}</BigIcon>
    {lines.map((l, i) => (
      <BigLabel key={l}>{l}{inline && i === lines.length - 1 && <Chevron />}</BigLabel>
    ))}
    {chevron && <ChevronLine><Chevron /></ChevronLine>}
  </BigButton>
);
const Small = ({ icon, text, chevron, split, height }) => (
  <SmallButton $height={height}>{icon}<SmallText $split={split}>{text}</SmallText>{chevron && <Chevron />}</SmallButton>
);
const RibbonGroup = ({ name, width, inset, launcher, children }) => (
  <Group $width={width} aria-label={name}>
    <GroupBody $inset={inset}>{children}</GroupBody>
    <GroupFoot>
      <GroupName>{name}</GroupName>
      {launcher}
    </GroupFoot>
  </Group>
);

function PivotRow({ row, n }) {
  if (row.kind === "blank") return <><Cell /><Cell /></>;
  if (row.kind === "rest") return <><PivotCell /><PivotCell /></>;
  if (row.kind === "head")
    return (
      <>
        <PivotCell $head $bold $rule>
          <HeadLine>Row Labels<FilterButton aria-label="Filter row labels"><svg width="8" height="5" viewBox="0 0 8 5"><path d="M0 0h8L4 4.500z" fill="#555" /></svg></FilterButton></HeadLine>
        </PivotCell>
        <PivotCell $head $bold $rule>Sum of Revenue</PivotCell>
      </>
    );
  if (row.kind === "year")
    return (
      <>
        <PivotCell $bold $rule><YearLine><Collapse aria-label={`Collapse ${row.label}`} />{row.label}</YearLine></PivotCell>
        <PivotCell $rule />
      </>
    );
  return (
    <>
      <PivotCell $indent>{row.label}</PivotCell>
      <PivotCell $num $active={n === 14}>{row.value}</PivotCell>
    </>
  );
}

export default function App() {
  return (
    <Window>
      <Global />
      <Ribbon>
        <TabRow>
          {tabs.map((t) => (
            <Tab key={t} $active={t === "Insert"} $contextual={t === "PivotTable Analyze" || t === "Design"}>
              {t}
              {t === "Insert" && <TabMarker />}
            </Tab>
          ))}
          <TellMe>
            <svg width="16" height="22" viewBox="0 0 16 22" fill="none" stroke="#444" strokeWidth="1.400"><path d="M5 15.500q0-2.500-2-4.500-2-2-2-4.500a7 6 0 0 1 14 0Q15 9 13 11t-2 4.500zM5 18h6M6 20.500h4" /></svg>
            <TellInput placeholder="Tell me what you want to do" aria-label="Tell me what you want to do" />
          </TellMe>
        </TabRow>
        <Groups>
          <RibbonGroup name="Tables" width={251}>
            <Big icon={<PivotIcon />} lines={["PivotTable"]} width={72} disabled />
            <Big icon={<RecPivotIcon />} lines={["Recommended", "PivotTables"]} width={106} disabled />
            <Big icon={<TableIcon />} lines={["Table"]} width={52} disabled />
          </RibbonGroup>
          <RibbonGroup name="Illustrations" width={328}>
            <Big icon={<PicturesIcon />} lines={["Pictures"]} width={56} chevron />
            <Stack $width={130} $left={3}>
              <Small icon={<ShapesIcon />} text="Shapes" chevron />
              <Small icon={<IconsIcon />} text="Icons" />
              <Small icon={<CubeIcon />} text="3D Models" chevron split />
            </Stack>
            <Stack $width={120} $left={3}>
              <Small icon={<SmartArtIcon />} text="SmartArt" />
              <Small icon={<ScreenshotIcon />} text="Screenshot" chevron />
            </Stack>
          </RibbonGroup>
          <RibbonGroup name="Add-ins" width={181} inset={14}>
            <Stack $width={134} $top={6}>
              <Small icon={<GetIcon />} text="Get Add-ins" height={40} />
              <Small icon={<MyIcon />} text="My Add-ins" chevron split height={40} />
            </Stack>
            <Stack $width={20} $top={1}>
              <SmallButton $height={30} aria-label="Visio Data Visualizer"><VisioIcon /></SmallButton>
              <SmallButton $height={30} aria-label="Bing Maps"><BingIcon /></SmallButton>
              <SmallButton $height={30} aria-label="People Graph"><PeopleIcon /></SmallButton>
            </Stack>
          </RibbonGroup>
          <RibbonGroup
            name="Charts"
            width={389}
            launcher={
              <Launcher aria-label="See all charts">
                <svg width="10" height="10" viewBox="0 0 10 10" fill="none" stroke="#555"><path d="M.5 9V.5H9M3.500 3.500l5 5M9.500 4v5.500H4" /></svg>
                <LauncherMarker />
              </Launcher>
            }
          >
            <Big icon={<RecChartIcon />} lines={["Recommended", "Charts"]} width={104} />
            <ChartGrid>
              {miniCharts.map(([label, key]) => (
                <ChartButton key={key} aria-label={label}>
                  <svg width="20" height="20" viewBox="0 0 20 20">{mini[key]}</svg>
                  <Chevron />
                </ChartButton>
              ))}
            </ChartGrid>
            <Big icon={<GlobeIcon />} lines={["Maps"]} width={48} chevron />
            <Big icon={<PivotChartIcon />} lines={["PivotChart"]} width={76} chevron />
          </RibbonGroup>
          <RibbonGroup name="Tours" width={72}>
            <Big icon={<MapIcon />} lines={["3D", "Map"]} width={50} inline />
          </RibbonGroup>
          <RibbonGroup name="Sparklines" width={180} inset={9}>
            <Big width={54} lines={["Line"]} icon={<SparkFrame><path d="m5 21 4 6 7-13 7 13 9-13 5 7" fill="none" stroke={BLUE} strokeWidth="1.400" /></SparkFrame>} />
            <Big width={54} lines={["Column"]} icon={<SparkFrame><path d="M7 17h5v11H7zM15 13h5v15h-5zM23 20h5v8h-5zM31 22h5v6h-5z" fill={BLUE} /></SparkFrame>} />
            <Big width={54} lines={["Win/", "Loss"]} icon={<SparkFrame><path d="M7 11h4v8H7zM13 11h4v8h-4zM31 11h4v8h-4z" fill="#74a593" /><path d="M19 20h4v8h-4zM25 20h4v8h-4z" fill="#d65f43" /></SparkFrame>} />
          </RibbonGroup>
          <RibbonGroup name="Filters" width={134} inset={13}>
            <Big icon={<SlicerIcon />} lines={["Slicer"]} width={46} />
            <Big icon={<TimelineIcon />} lines={["Timeline"]} width={66} />
          </RibbonGroup>
          <RibbonGroup name="Links" width={76}>
            <Big icon={<LinkIcon />} lines={["Link"]} width={54} disabled />
          </RibbonGroup>
        </Groups>
      </Ribbon>

      <FormulaBar>
        <NameBox>
          <NameInput defaultValue="B14" aria-label="Name box" />
          <button aria-label="Open name list"><svg width="8" height="5" viewBox="0 0 8 5"><path d="M0 0h8L4 4.500z" fill="#777" /></svg></button>
        </NameBox>
        <Dots><i /><i /><i /></Dots>
        <Actions>
          <button aria-label="Cancel entry"><svg width="16" height="14" viewBox="0 0 16 14" stroke="#bdbdbd" strokeWidth="2"><path d="m1 1 14 12M15 1 1 13" /></svg></button>
          <button aria-label="Confirm entry"><svg width="18" height="14" viewBox="0 0 18 14" fill="none" stroke="#bdbdbd" strokeWidth="2.500"><path d="m1 7 6 5L17 1" /></svg></button>
          <FxButton aria-label="Insert function">fx</FxButton>
        </Actions>
        <FormulaField><FormulaInput defaultValue="88891" aria-label="Formula" /></FormulaField>
      </FormulaBar>

      <Body>
        <Sheet>
          <Grid>
            <colgroup>
              <Col $width={37} />
              {columns.map((c) => <Col key={c} $width={widths[c] || 85} />)}
            </colgroup>
            <thead>
              <tr>
                <Corner aria-label="Select all"><svg width="18" height="18" viewBox="0 0 18 18"><path d="M18 0v18H0z" fill="#b4b4b4" /></svg></Corner>
                {columns.map((c) => <ColHead key={c} $on={c === "A" || c === "B"}>{c}</ColHead>)}
              </tr>
            </thead>
            <tbody>
              {rows.map((row, i) => (
                <tr key={i}>
                  <RowHead $on={i > 1}>{row.kind === "rest" ? null : i + 1}</RowHead>
                  <PivotRow row={row} n={i + 1} />
                  {columns.slice(2).map((c) => <Cell key={c} />)}
                </tr>
              ))}
            </tbody>
          </Grid>
          <Selection />
          <RangeMarker />
        </Sheet>
        <Pane aria-label="Field list">
          <PaneTitle $gap={20}>a</PaneTitle>
          <PaneText $gap={23}>lo</PaneText>
          <PaneSearch />
          <PaneList>
            <PaneText $gap={0}>ne</PaneText>
            <PaneText $gap={3}>e</PaneText>
            <PaneText $gap={32} $color="#2b6cc4">_T</PaneText>
            <PaneText $gap={28}>ty</PaneText>
            <PaneText $gap={5} $bold>ue</PaneText>
            <PaneText $gap={5} $color="#2b6cc4">rs</PaneText>
            <PaneText $gap={40}>e</PaneText>
          </PaneList>
          <PaneText $gap={25}>s</PaneText>
          <PaneArea $gap={46} $height={100} />
          <PaneArea $gap={43} $height={24} />
        </Pane>
      </Body>

      <Dialog role="dialog" aria-label="Insert Chart">
        <TitleBar>
          <Title>Insert Chart</Title>
          <TitleButton aria-label="Help">?</TitleButton>
          <TitleButton aria-label="Close"><svg width="13" height="13" viewBox="0 0 13 13" stroke="#fff" strokeWidth="1.200"><path d="m.5.5 12 12M12.500.5l-12 12" /></svg></TitleButton>
        </TitleBar>
        <DialogTabs><DialogTab>All Charts</DialogTab></DialogTabs>
        <Panel>
          <TypeList>
            {Object.keys(typeIcons).map((name) => (
              <TypeItem key={name}>
                <TypeButton $on={name === "Line"}><TypeIcon name={name} />{name}</TypeButton>
                {name === "Line" && <NavMarker />}
              </TypeItem>
            ))}
          </TypeList>
          <Divider />
          <Detail>
            <Gallery>
              {thumbs.map((t, i) => (
                <Thumb key={t.name} $on={i === 0} aria-label={t.name}>
                  <svg width="40" height="38" viewBox="0 0 40 38">
                    <path d="M.5 0v36.500H40" fill="none" stroke={DK} />
                    <Series points={t.light} color={LT} dots={t.dots} />
                    <Series points={t.dark} color={DK} dots={t.dots} />
                  </svg>
                </Thumb>
              ))}
              <Thumb aria-label="3-D Line">
                <svg width="40" height="38" viewBox="0 0 40 38" fill="none" stroke={DK}>
                  <path d="M7.500 0v25.500H40M7.500 25 0 33" />
                  <path d="m11 13 14-10 8 11 6 0-2 4-6-1-7-10z" fill="#cfcfcf" />
                  <path d="m0 22 11-6 13 13 8-7-11 14L9 20l-9 4z" fill="#fff" />
                </svg>
              </Thumb>
              <GalleryMarker />
            </Gallery>
            <Heading>Line</Heading>
            <Preview aria-label="Line chart preview"><PreviewChart /></Preview>
          </Detail>
        </Panel>
        <Footer>
          <OkWrap><DialogButton $primary>OK</DialogButton><OkMarker /></OkWrap>
          <DialogButton>Cancel</DialogButton>
        </Footer>
        <Grip width="11" height="11" viewBox="0 0 11 11" fill="#bfbfbf"><path d="M8 0h3v3H8zM8 4h3v3H8zM8 8h3v3H8zM4 4h3v3H4zM4 8h3v3H4zM0 8h3v3H0z" /></Grip>
      </Dialog>
    </Window>
  );
}
